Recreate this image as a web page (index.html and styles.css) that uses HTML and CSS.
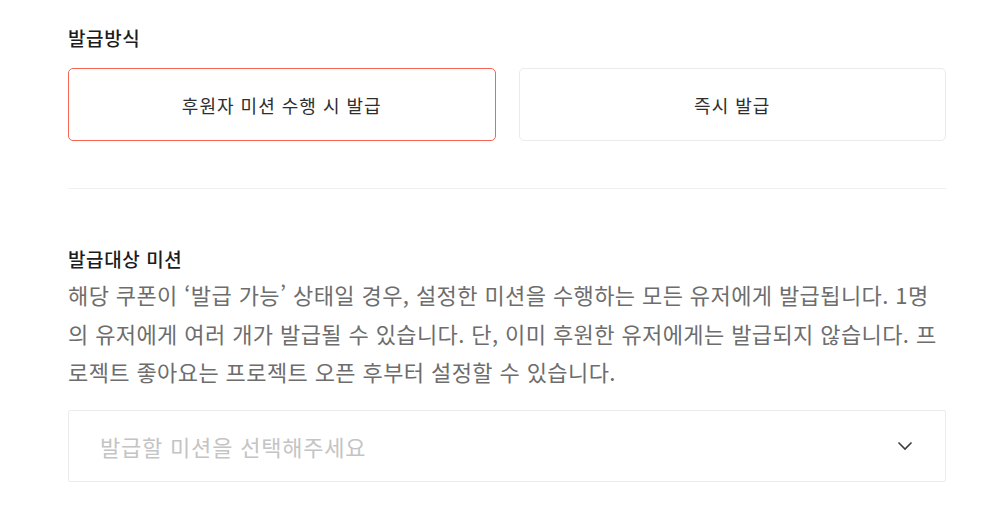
FILE: index.html
```html
<!DOCTYPE html>
<html lang="ko">
<head>
<meta charset="utf-8">
<link rel="stylesheet" href="styles.css">
</head>
<body>
<main class="form">
  <section class="method">
    <h3 class="label">발급방식</h3>
    <div class="options">
      <button class="option selected">후원자 미션 수행 시 발급</button>
      <button class="option">즉시 발급</button>
    </div>
  </section>
  <hr class="divider">
  <section class="mission">
    <h3 class="label">발급대상 미션</h3>
    <p class="desc">해당 쿠폰이 ‘발급 가능’ 상태일 경우, 설정한 미션을 수행하는 모든 유저에게 발급됩니다. 1명의 유저에게 여러 개가 발급될 수 있습니다. 단, 이미 후원한 유저에게는 발급되지 않습니다. 프로젝트 좋아요는 프로젝트 오픈 후부터 설정할 수 있습니다.</p>
    <div class="select">
      <span class="placeholder">발급할 미션을 선택해주세요</span>
      <svg class="chevron" width="16" height="10" viewBox="0 0 16 10"><polyline points="1.5,1.5 8,8 14.5,1.5" fill="none" stroke="#3d3d3d" stroke-width="1.6"/></svg>
    </div>
  </section>
</main>
</body>
</html>
```
FILE: styles.css
```css
* { box-sizing: border-box; }
body {
  margin: 0;
  background: #fff;
  font-family: "Noto Sans CJK KR", "Noto Sans", sans-serif;
}
.form {
  width: 878px;
  margin-left: 68px;
  padding-top: 26px;
}
.label {
  margin: 0;
  font-size: 19px;
  letter-spacing: 0.6px;
  line-height: 24px;
  font-weight: 500;
  color: #1c1c1c;
}
.options {
  display: flex;
  gap: 23px;
  margin-top: 18px;
}
.option {
  flex: 1;
  height: 73px;
  background: #fff;
  border: 1px solid #ebebeb;
  border-radius: 5px;
  font-family: inherit;
  font-size: 18px;
  letter-spacing: 1px;
  color: #2e2e2e;
  padding: 0;
}
.option.selected {
  border-color: #f86453;
}
.divider {
  margin: 47px 0 0;
  border: 0;
  border-top: 1px solid #f0f0f0;
  height: 0;
}
.mission {
  padding-top: 58px;
}
.desc {
  margin: 4px 0 0;
  font-size: 22px;
  letter-spacing: 0.4px;
  line-height: 38.5px;
  color: #6d6d6d;
}
.select {
  margin-top: 19px;
  height: 72px;
  border: 1px solid #ececec;
  border-radius: 2px;
  display: flex;
  align-items: center;
  justify-content: space-between;
  padding: 0 32px 0 31px;
}
.placeholder {
  font-size: 22px;
  letter-spacing: 0.8px;
  color: #c4c4c4;
}
.chevron { display: block; }
```
